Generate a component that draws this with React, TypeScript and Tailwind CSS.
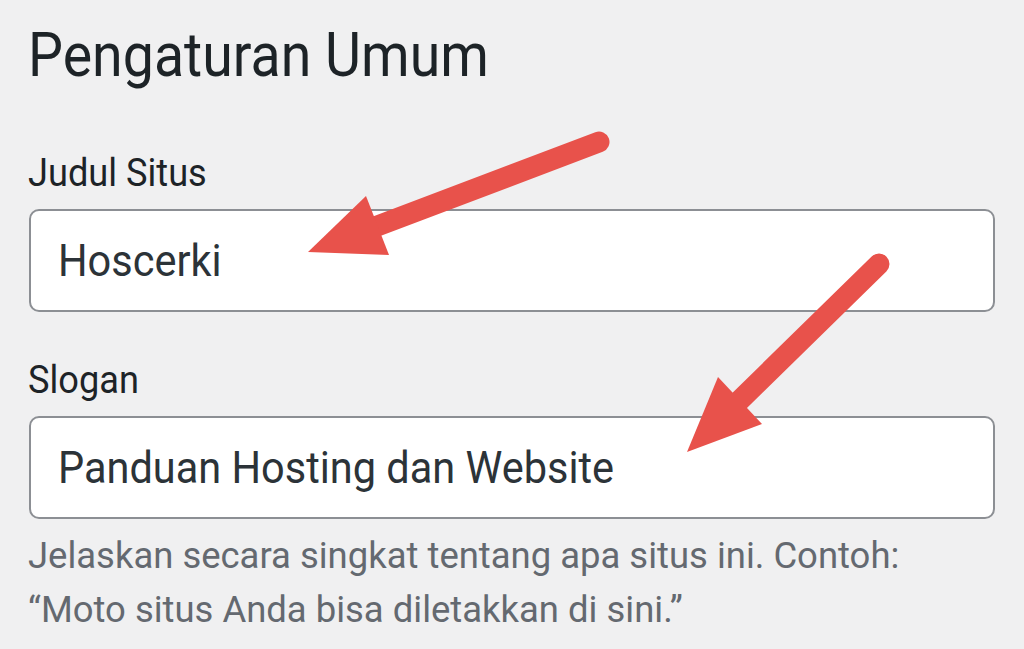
import React from "react";

export default function App() {
  return (
    <div
      className="relative w-[1024px] h-[649px] overflow-hidden bg-[#f0f0f1]"
      style={{ fontFamily: "Roboto, 'Liberation Sans', sans-serif" }}
    >
      <div className="flex flex-col pl-[28px] pr-[29px] pt-[19px]">
        <h1 className="text-[62px] leading-[72px] text-[#1d2327] font-normal whitespace-nowrap">
          <span className="inline-block origin-left scale-x-[0.895]">Pengaturan Umum</span>
        </h1>
        <div className="mt-[58px] text-[38px] leading-[48px] text-[#1d2327] whitespace-nowrap">
          <span className="inline-block origin-left scale-x-[0.952]">Judul Situs</span>
        </div>
        <div className="mt-[12px] ml-[1px] h-[103px] flex items-center rounded-[10px] border-2 border-[#8c8f94] bg-white px-[27px] text-[44px] text-[#2c3338] whitespace-nowrap">
          <span className="inline-block origin-left scale-x-[0.943]">Hoscerki</span>
        </div>
        <div className="mt-[44px] text-[38px] leading-[48px] text-[#1d2327] whitespace-nowrap">
          <span className="inline-block origin-left scale-x-[0.952]">Slogan</span>
        </div>
        <div className="mt-[12px] ml-[1px] h-[103px] flex items-center rounded-[10px] border-2 border-[#8c8f94] bg-white px-[27px] text-[44px] text-[#2c3338] whitespace-nowrap">
          <span className="inline-block origin-left scale-x-[0.943]">Panduan Hosting dan Website</span>
        </div>
        <div className="mt-[10px] text-[37px] leading-[54px] text-[#646970] whitespace-nowrap">
          <p className="origin-left scale-x-[0.985]">Jelaskan secara singkat tentang apa situs ini. Contoh:</p>
          <p className="origin-left scale-x-[0.985]">“Moto situs Anda bisa diletakkan di sini.”</p>
        </div>
      </div>

      <svg
        className="absolute left-0 top-0 pointer-events-none"
        width="1024"
        height="649"
        viewBox="0 0 1024 649"
      >
        <line
          x1="599"
          y1="142"
          x2="372"
          y2="228"
          stroke="#e8524b"
          strokeWidth="21"
          strokeLinecap="round"
        />
        <polygon points="308,252 366,196 389,255" fill="#e8524b" />
        <line
          x1="879"
          y1="264"
          x2="735"
          y2="405"
          stroke="#e8524b"
          strokeWidth="21"
          strokeLinecap="round"
        />
        <polygon points="687,452 718,377 762,424" fill="#e8524b" />
      </svg>
    </div>
  );
}
